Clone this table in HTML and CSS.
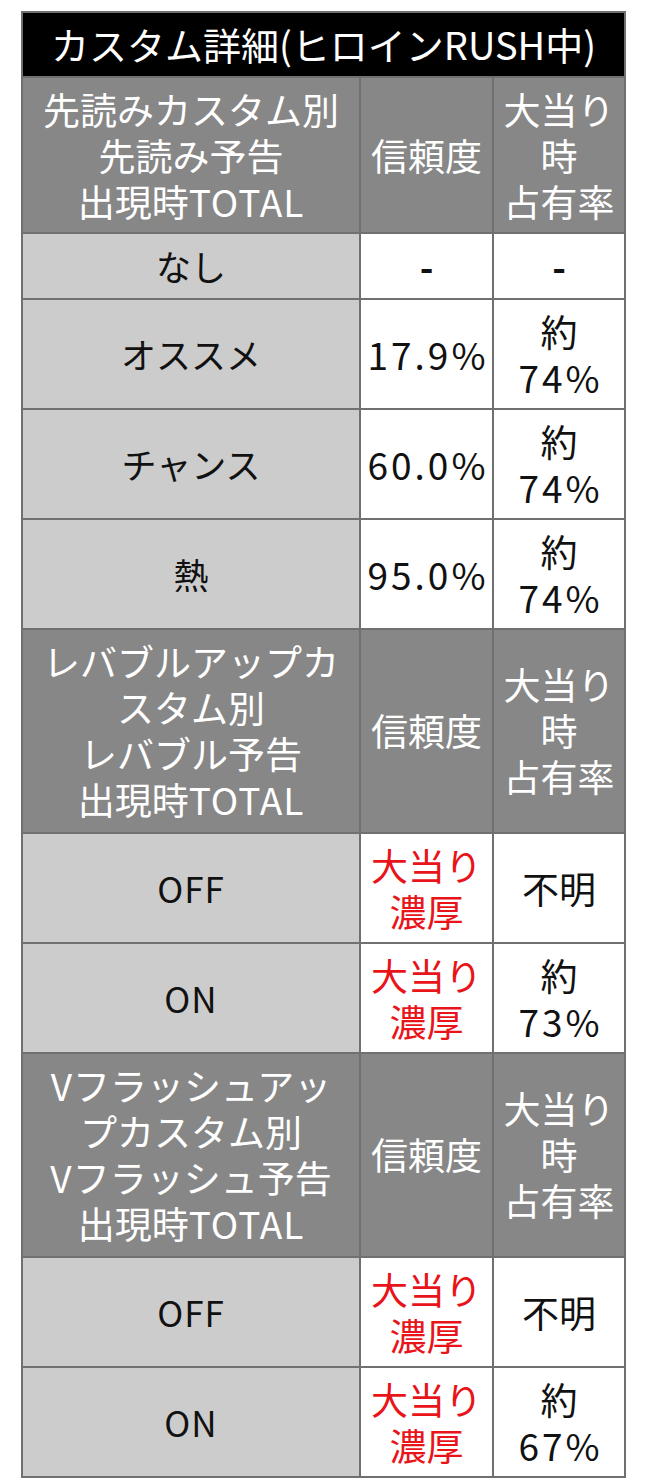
FILE: index.html
```html
<!DOCTYPE html>
<html lang="ja">
<head>
<meta charset="utf-8">
<title>カスタム詳細</title>
<link rel="stylesheet" href="styles.css">
</head>
<body>
<div class="wrap">
<table class="tbl">
  <colgroup>
    <col class="c1">
    <col class="c2">
    <col class="c3">
  </colgroup>
  <tr><th class="title" colspan="3">カスタム詳細(ヒロインRUSH中)</th></tr>
  <tr class="head">
    <th>先読みカスタム別<br>先読み予告<br>出現時<span class="lat">TOTAL</span></th>
    <th>信頼度</th>
    <th>大当り<br>時<br>占有率</th>
  </tr>
  <tr class="one">
    <td class="label">なし</td>
    <td><span class="dash">-</span></td>
    <td><span class="dash">-</span></td>
  </tr>
  <tr>
    <td class="label">オススメ</td>
    <td><span class="num">17.9%</span></td>
    <td>約<br><span class="num">74%</span></td>
  </tr>
  <tr>
    <td class="label">チャンス</td>
    <td><span class="num">60.0%</span></td>
    <td>約<br><span class="num">74%</span></td>
  </tr>
  <tr>
    <td class="label">熱</td>
    <td><span class="num">95.0%</span></td>
    <td>約<br><span class="num">74%</span></td>
  </tr>
  <tr class="head four">
    <th>レバブルアップカ<br>スタム別<br>レバブル予告<br>出現時<span class="lat">TOTAL</span></th>
    <th>信頼度</th>
    <th>大当り<br>時<br>占有率</th>
  </tr>
  <tr>
    <td class="label"><span class="lat">OFF</span></td>
    <td class="red">大当り<br>濃厚</td>
    <td>不明</td>
  </tr>
  <tr>
    <td class="label"><span class="lat">ON</span></td>
    <td class="red">大当り<br>濃厚</td>
    <td>約<br><span class="num">73%</span></td>
  </tr>
  <tr class="head four">
    <th><span class="lat">V</span>フラッシュアッ<br>プカスタム別<br><span class="lat">V</span>フラッシュ予告<br>出現時<span class="lat">TOTAL</span></th>
    <th>信頼度</th>
    <th>大当り<br>時<br>占有率</th>
  </tr>
  <tr>
    <td class="label"><span class="lat">OFF</span></td>
    <td class="red">大当り<br>濃厚</td>
    <td>不明</td>
  </tr>
  <tr>
    <td class="label"><span class="lat">ON</span></td>
    <td class="red">大当り<br>濃厚</td>
    <td>約<br><span class="num">67%</span></td>
  </tr>
</table>
</div>
</body>
</html>
```

FILE: styles.css
```css
html, body {
  margin: 0;
  padding: 0;
  background: #ffffff;
}
.wrap {
  padding: 11px 0 0 21px;
}
.tbl {
  border-collapse: collapse;
  table-layout: fixed;
  width: 603px;
  font-family: "Noto Sans CJK JP", "Noto Sans", sans-serif;
  font-size: 37px;
  line-height: 46px;
  color: #111111;
}
.c1 { width: 338px; }
.c2 { width: 133px; }
.c3 { width: 132px; }
.tbl th, .tbl td {
  border: 2px solid #707070;
  text-align: center;
  vertical-align: middle;
  padding: 8px 0;
  font-weight: normal;
  background: #ffffff;
}
.tbl .title {
  background: #000000;
  color: #ffffff;
  font-size: 38px;
  padding: 8px 0 9px 0;
}
.tbl .head th {
  background: #878787;
  color: #ffffff;
}
.tbl .four th {
  padding: 8px 0 10px 0;
}
.tbl .one td {
  height: 48px;
  padding: 8px 0;
}
.tbl td.label {
  background: #cccccc;
  font-size: 35px;
}
.tbl td.red {
  color: #e8141a;
}
.num {
  letter-spacing: 3px;
  margin-right: -3px;
}
.lat {
  letter-spacing: 1px;
}
.dash {
  font-weight: bold;
}
```
